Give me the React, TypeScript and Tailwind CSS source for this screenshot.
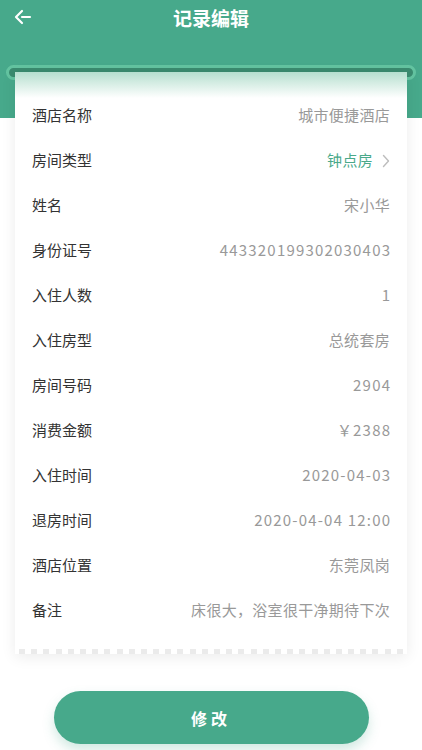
import React from "react";

const rows: { label: string; value: string; green?: boolean; arrow?: boolean; num?: boolean }[] = [
  { label: "酒店名称", value: "城市便捷酒店" },
  { label: "房间类型", value: "钟点房", green: true, arrow: true },
  { label: "姓名", value: "宋小华" },
  { label: "身份证号", value: "443320199302030403", num: true },
  { label: "入住人数", value: "1", num: true },
  { label: "入住房型", value: "总统套房" },
  { label: "房间号码", value: "2904", num: true },
  { label: "消费金额", value: "￥2388", num: true },
  { label: "入住时间", value: "2020-04-03", num: true },
  { label: "退房时间", value: "2020-04-04 12:00", num: true },
  { label: "酒店位置", value: "东莞凤岗" },
  { label: "备注", value: "床很大，浴室很干净期待下次" },
];

export default function App() {
  const font = { fontFamily: '"Noto Sans CJK SC", "Noto Sans", sans-serif' };
  return (
    <div className="w-[422px] h-[750px] bg-white overflow-hidden relative" style={font}>
      <div className="bg-[#47a98b] h-[118px]">
        <div className="h-[34px] flex items-center relative">
          <svg className="absolute left-[13px] top-[9px]" width="20" height="16" viewBox="0 0 20 16" fill="none">
            <path d="M9 2 L3 8 L9 14" stroke="white" strokeWidth="2.2" strokeLinecap="round" strokeLinejoin="round" />
            <path d="M9 8 L17 8" stroke="white" strokeWidth="2.2" strokeLinecap="round" />
          </svg>
          <div className="flex-1 text-center text-white text-[19px] font-bold leading-none pt-[1px]">记录编辑</div>
        </div>
      </div>
      <div className="-mt-[53px] relative">
        <div className="mx-[6px] h-[15px] rounded-full bg-[#3a8b6f] border-[3px] border-[#63c3a0]" />
        <div className="mx-[15px] -mt-[8px] relative z-10 bg-white shadow-[0_3px_14px_rgba(0,0,0,0.08)]">
          <div className="absolute inset-x-0 top-0 h-[26px] bg-gradient-to-b from-[#b5dfcf] to-white" />
          <div className="relative pt-[21px] pb-[16px]">
            {rows.map((r) => (
              <div key={r.label} className="h-[45px] flex items-center pl-[17px] pr-[17px] text-[15px]">
                <span className="text-[#333333]">{r.label}</span>
                <span
                  className={`ml-auto ${r.green ? "text-[#4aa98a]" : "text-[#999999]"} ${r.num ? "tracking-[1.2px] -mr-[1.2px]" : "tracking-[0.3px]"}`}
                >
                  {r.value}
                </span>
                {r.arrow && (
                  <svg className="ml-[9px]" width="8" height="14" viewBox="0 0 8 14" fill="none">
                    <path d="M1.5 1.5 L6.5 7 L1.5 12.5" stroke="#bdbdbd" strokeWidth="1.4" strokeLinecap="round" strokeLinejoin="round" />
                  </svg>
                )}
              </div>
            ))}
          </div>
          <div className="flex justify-between px-[4px] h-[5px]">
            {Array.from({ length: 32 }).map((_, i) => (
              <div key={i} className="w-[6px] h-[5px] bg-[#ebebeb]" />
            ))}
          </div>
        </div>
        <div className="flex justify-center mt-[37px]">
          <div className="w-[315px] h-[53px] rounded-full bg-[#47a98b] flex items-center justify-center text-white text-[16px] font-bold tracking-[4px] shadow-[0_6px_12px_rgba(71,169,139,0.25)]">
            修改
          </div>
        </div>
      </div>
    </div>
  );
}
